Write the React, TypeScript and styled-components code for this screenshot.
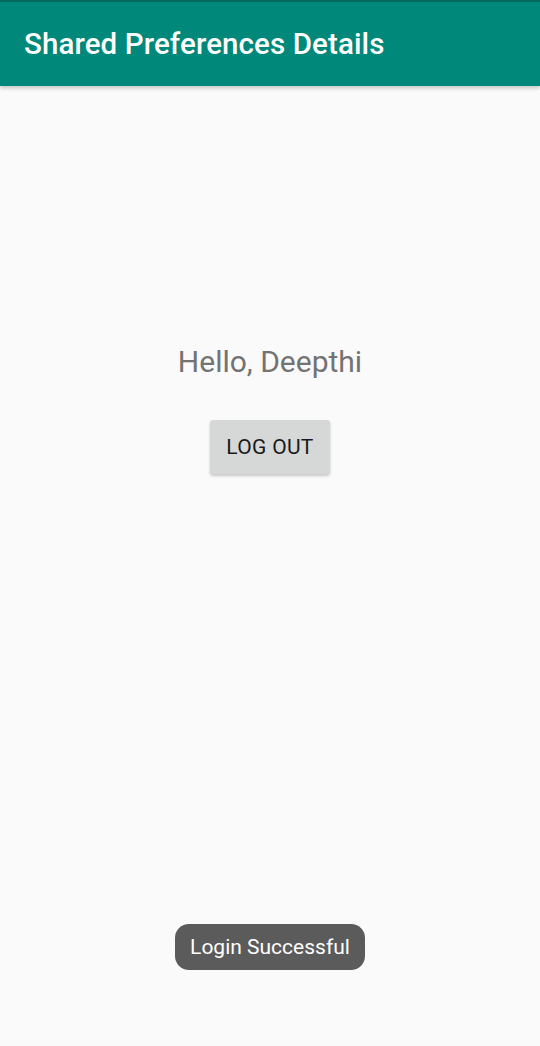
import React from "react";
import styled, { createGlobalStyle } from "styled-components";

const Global = createGlobalStyle`
  html, body { margin: 0; padding: 0; background: #fafafa; }
  body { font-family: Roboto, "Noto Sans", sans-serif; }
  * { box-sizing: border-box; }
`;

const Screen = styled.div`
  width: 540px;
  height: 1046px;
  background: #fafafa;
  display: flex;
  flex-direction: column;
  position: relative;
  overflow: hidden;
`;

const AppBar = styled.header`
  height: 86px;
  background: #00887a;
  border-top: 2px solid #00695f;
  display: flex;
  align-items: center;
  padding: 0 24px;
  box-shadow: 0 2px 4px rgba(0, 0, 0, 0.22);
  position: relative;
  z-index: 1;
`;

const Title = styled.h1`
  margin: 0;
  color: #ffffff;
  font-family: Roboto, sans-serif;
  font-weight: 500;
  font-size: 29.5px;
  letter-spacing: 0.1px;
`;

const Content = styled.main`
  flex: 1;
  display: flex;
  flex-direction: column;
  align-items: center;
  padding-top: 256px;
`;

const Greeting = styled.p`
  margin: 0;
  color: #737373;
  font-family: Roboto, sans-serif;
  font-size: 30px;
  line-height: 40px;
`;

const Button = styled.button`
  margin-top: 38px;
  width: 120px;
  height: 54px;
  border: none;
  border-radius: 3px;
  background: #d6d7d7;
  color: #1a1a1a;
  font-family: Roboto, sans-serif;
  font-weight: 400;
  font-size: 21px;
  letter-spacing: 0.3px;
  box-shadow: 0 2px 3px rgba(0, 0, 0, 0.2);
  padding: 0;
`;

const Toast = styled.div`
  position: absolute;
  left: 175px;
  top: 924px;
  width: 190px;
  height: 46px;
  border-radius: 14px;
  background: #5b5b5b;
  color: #ffffff;
  font-family: Roboto, sans-serif;
  font-size: 21px;
  display: flex;
  align-items: center;
  justify-content: center;
`;

export default function App() {
  return (
    <Screen>
      <Global />
      <AppBar>
        <Title>Shared Preferences Details</Title>
      </AppBar>
      <Content>
        <Greeting>Hello, Deepthi</Greeting>
        <Button>LOG OUT</Button>
      </Content>
      <Toast>Login Successful</Toast>
    </Screen>
  );
}
